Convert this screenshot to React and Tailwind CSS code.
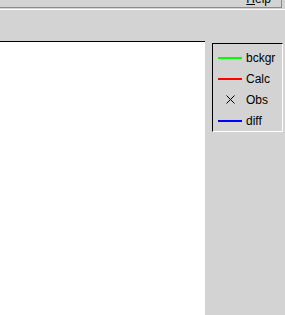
import React from 'react';

const items = [
  { label: 'bckgr', kind: 'line', color: 'bg-[#00ff00]' },
  { label: 'Calc', kind: 'line', color: 'bg-[#ff0000]' },
  { label: 'Obs', kind: 'cross' },
  { label: 'diff', kind: 'line', color: 'bg-[#0000ff]' },
];

const LegendRow = ({ item }) => (
  <div className="h-[21px] flex items-center">
    <div className="w-[24px] flex items-center justify-center">
      {item.kind === 'line' ? (
        <div className={`w-[24px] h-[2px] ${item.color}`} />
      ) : (
        <svg width="9" height="9" viewBox="0 0 9 9">
          <path d="M0.5 0.5 L8.5 8.5 M8.5 0.5 L0.5 8.5" stroke="#000" strokeWidth="1" />
        </svg>
      )}
    </div>
    <span className="ml-[4px] text-[12px] leading-[14px] text-black">{item.label}</span>
  </div>
);

const App = () => {
  return (
    <div className="w-[285px] h-[315px] bg-[#d3d3d3] flex flex-col overflow-hidden font-['Liberation_Sans',Arial,sans-serif]">
      {/* menu bar, scrolled mostly out of view */}
      <div className="h-[8px] w-[282px] border-b border-r border-[#8a8a8a] overflow-hidden flex justify-end pr-[10px]">
        <span className="text-[12px] leading-[12px] -mt-[7px] text-black">
          <span className="underline">H</span>elp
        </span>
      </div>
      <div className="h-[1px]" />
      <div className="h-[1px] bg-white" />

      <div className="flex flex-1 pt-[31px]">
        {/* plot canvas */}
        <div className="w-[205px] bg-white border-t border-black" />

        {/* legend */}
        <div className="ml-[7px] mt-[2px] w-[71px] h-[89px] border border-l-black border-t-black border-r-white border-b-white pt-[4px] pl-[5px] flex flex-col">
          {items.map((item) => (
            <LegendRow key={item.label} item={item} />
          ))}
        </div>
      </div>
    </div>
  );
};

export default App;
